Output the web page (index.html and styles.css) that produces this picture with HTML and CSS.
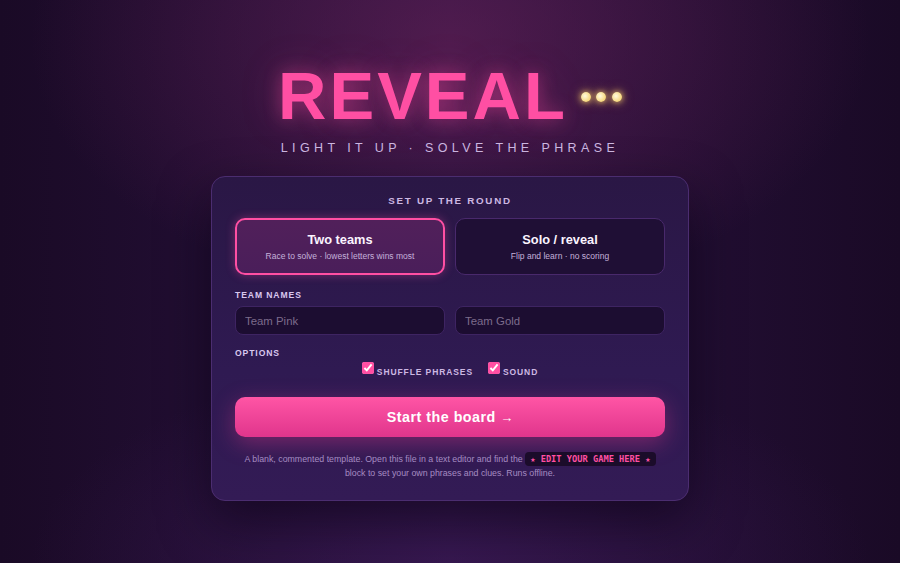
FILE: index.html
```html
<!DOCTYPE html>
<html lang="en">
<head>
<meta charset="utf-8">
<title>Reveal</title>
<link rel="stylesheet" href="styles.css">
</head>
<body>
<main class="page">
  <header class="hero">
    <h1 class="title">REVEAL<span class="dots"><span class="dot"></span><span class="dot"></span><span class="dot"></span></span></h1>
    <p class="tagline">LIGHT IT UP · SOLVE THE PHRASE</p>
  </header>
  <section class="card">
    <h2 class="card-title">SET UP THE ROUND</h2>
    <div class="modes">
      <button class="mode active">
        <span class="mode-name">Two teams</span>
        <span class="mode-desc">Race to solve · lowest letters wins most</span>
      </button>
      <button class="mode">
        <span class="mode-name">Solo / reveal</span>
        <span class="mode-desc">Flip and learn · no scoring</span>
      </button>
    </div>
    <div class="label">TEAM NAMES</div>
    <div class="names">
      <input class="name-input" type="text" placeholder="Team Pink">
      <input class="name-input" type="text" placeholder="Team Gold">
    </div>
    <div class="label label-options">OPTIONS</div>
    <div class="options">
      <label class="opt"><input type="checkbox" checked> SHUFFLE PHRASES</label>
      <label class="opt"><input type="checkbox" checked> SOUND</label>
    </div>
    <button class="start">Start the board <span class="arrow">→</span></button>
    <p class="note">A blank, commented template. Open this file in a text editor and find the <code class="tag">★ EDIT YOUR GAME HERE ★</code><br>block to set your own phrases and clues. Runs offline.</p>
  </section>
</main>
</body>
</html>
```
FILE: styles.css
```css
* { box-sizing: border-box; }
html, body { margin: 0; height: 100%; }
body {
  font-family: "Liberation Sans", Arial, sans-serif;
  color: #f3eafc;
  background:
    radial-gradient(ellipse 420px 260px at 450px 40px, rgba(110, 35, 90, 0.55), rgba(110, 35, 90, 0) 100%),
    radial-gradient(ellipse 420px 200px at 450px 563px, rgba(70, 30, 100, 0.45), rgba(70, 30, 100, 0) 100%),
    linear-gradient(90deg, #1a0a26 0%, #2a1240 50%, #1a0a26 100%);
  overflow: hidden;
}
.page {
  display: flex;
  flex-direction: column;
  align-items: center;
  padding-top: 56px;
}
.hero {
  display: flex;
  flex-direction: column;
  align-items: center;
}
.title {
  margin: 0;
  font-size: 67px;
  line-height: 80px;
  font-weight: 700;
  letter-spacing: 3px;
  color: #ff4fa3;
  text-shadow: 0 0 18px rgba(255, 79, 163, 0.45), 0 0 40px rgba(255, 79, 163, 0.25);
  display: flex;
  align-items: center;
}
.dots {
  display: inline-flex;
  gap: 5.5px;
  margin-left: 13px;
  margin-top: 2px;
}
.dot {
  width: 10px;
  height: 10px;
  border-radius: 50%;
  background: radial-gradient(circle at 40% 40%, #fffbe0, #f6d77a 70%);
  box-shadow: 0 0 6px rgba(255, 215, 110, 0.9), 0 0 12px rgba(255, 200, 90, 0.5);
}
.tagline {
  margin: 5px 0 0;
  font-size: 12.5px;
  letter-spacing: 4.4px;
  color: #cdb8e2;
}
.card {
  margin-top: 21px;
  width: 478px;
  padding: 18px 23px 20px;
  border-radius: 14px;
  border: 1px solid #4b2d70;
  background: linear-gradient(180deg, #2a1745 0%, #2f1a52 60%, #331b55 100%);
  box-shadow: 0 20px 50px rgba(8, 2, 16, 0.55);
}
.card-title {
  margin: 0 0 11px;
  text-align: center;
  font-size: 9.8px;
  line-height: 12px;
  font-weight: 700;
  letter-spacing: 1.7px;
  color: #cdb8e2;
}
.modes {
  display: grid;
  grid-template-columns: 1fr 1fr;
  gap: 10px;
}
.mode {
  font-family: inherit;
  height: 57px;
  border-radius: 10px;
  border: 1px solid #49296c;
  background: #1f0f35;
  color: #fff;
  display: flex;
  flex-direction: column;
  align-items: center;
  justify-content: center;
  gap: 4px;
  padding: 0;
}
.mode.active {
  border: 2px solid #ff4fa3;
  background: linear-gradient(180deg, #51205a, #4a1e5a);
  box-shadow: 0 0 10px rgba(255, 79, 163, 0.35);
}
.mode-name {
  font-size: 12.8px;
  font-weight: 700;
  color: #fbf4ff;
}
.mode-desc {
  font-size: 8.5px;
  color: #c5b1da;
}
.label {
  margin-top: 15px;
  font-size: 8.6px;
  line-height: 11px;
  font-weight: 700;
  letter-spacing: 0.9px;
  color: #d9c8ef;
}
.label-options { margin-top: 13px; }
.names {
  margin-top: 5px;
  display: grid;
  grid-template-columns: 1fr 1fr;
  gap: 10px;
}
.name-input {
  height: 29px;
  border-radius: 8px;
  border: 1px solid #3e2462;
  background: #1c0d31;
  padding: 0 9px;
  font-family: inherit;
  font-size: 11.4px;
  color: #f3eafc;
  outline: none;
}
.name-input::placeholder { color: #7c6c8c; }
.options {
  margin-top: 7px;
  display: flex;
  justify-content: center;
  gap: 15px;
}
.opt {
  display: flex;
  align-items: center;
  gap: 3px;
  font-size: 8.5px;
  font-weight: 700;
  letter-spacing: 0.9px;
  color: #cdb8e2;
}
.opt input {
  margin: 0;
  width: 12px;
  height: 12px;
  accent-color: #ff4fa3;
  position: relative;
  top: -4px;
}
.start {
  margin-top: 19px;
  width: 100%;
  height: 40px;
  border: none;
  border-radius: 10px;
  background: linear-gradient(180deg, #ff55a5 0%, #e0358c 100%);
  color: #fff;
  font-family: inherit;
  font-size: 14.3px;
  font-weight: 700;
  letter-spacing: 0.5px;
  box-shadow: 0 6px 22px rgba(255, 60, 150, 0.35);
}
.arrow { font-size: 13px; letter-spacing: 0; }
.note {
  margin: 15px 0 0;
  text-align: center;
  font-size: 8.8px;
  line-height: 14px;
  color: #a68cc2;
}
.tag {
  font-family: "DejaVu Sans Mono", "Liberation Mono", monospace;
  font-weight: 700;
  font-size: 8.7px;
  color: #ff4fa3;
  background: #1b0c2a;
  border-radius: 4px;
  padding: 2px 5px;
  white-space: nowrap;
}
```
